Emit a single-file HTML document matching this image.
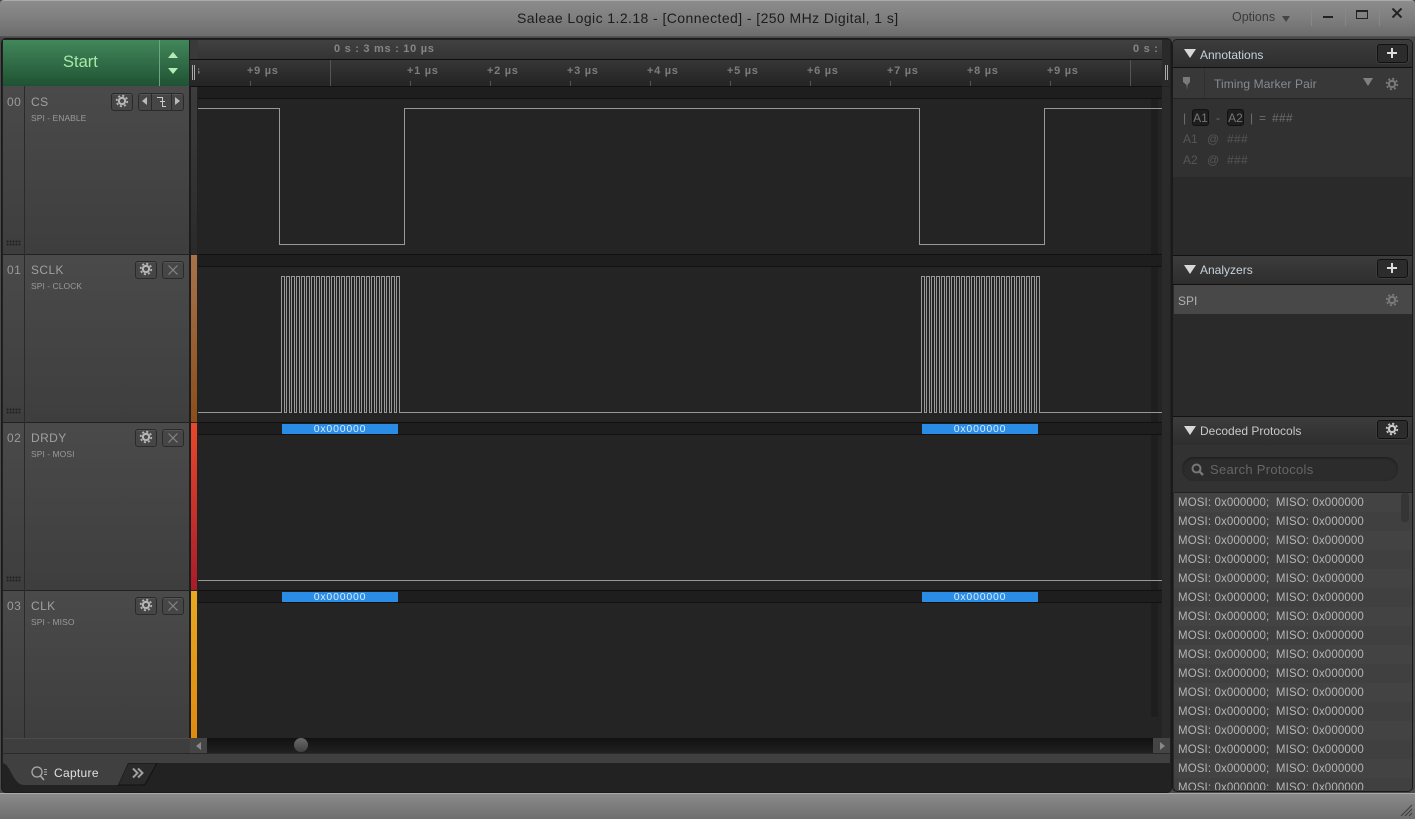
<!DOCTYPE html>
<html><head><meta charset="utf-8"><title>Saleae Logic</title>
<style>
html,body{margin:0;padding:0;background:#4a4a4a}
body{width:1415px;height:819px;overflow:hidden;position:relative;font-family:"Liberation Sans",sans-serif}
div,span.a,svg.a{position:absolute}
.t{white-space:nowrap;line-height:1}
.row{left:3px;width:186px;background:linear-gradient(#4a4a4a,#3e3e3e);border-bottom:1px solid #222}
.numsep{left:24px;width:1px;background:#2a2a2a}
.num{left:7px;font-size:12px;color:#9a9a9a;letter-spacing:.5px}
.nm{left:31px;font-size:12px;color:#a0a0a0;letter-spacing:.4px}
.sub{left:31px;font-size:8.5px;color:#9a9a9a;letter-spacing:.05px}
.btn{width:20px;height:16px;border:1px solid #2a2a2a;border-radius:3px;background:#464646;box-shadow:inset 0 1px 0 #555}
.band{left:198px;width:964px;height:11px;background:#1e1e1e;border-top:1px solid #111;border-bottom:1px solid #111}
.tick{font-size:11px;font-weight:bold;color:#7c7c7c;top:66px;letter-spacing:.7px}
.tk{width:1px;height:5px;top:81px;background:#555}
.phead{left:1173px;width:239px;background:linear-gradient(#3c3c3c,#2e2e2e);border-bottom:1px solid #111;border-top:1px solid #111}
.ptitle{left:1200px;font-size:12px;color:#c6d2dc}
.tri{width:0;height:0;border-left:6px solid transparent;border-right:6px solid transparent;border-top:9px solid #d8d8d8;left:1184px}
.pbtn{left:1377px;width:29px;height:17px;background:#2c2c2c;border:1px solid #111;border-radius:3px;box-shadow:0 0 0 1px #3c3c3c}
.li{left:1173px;width:228px;height:19px;padding-left:5px;font-size:11.5px;line-height:19px;color:#b4b4b4;white-space:nowrap;letter-spacing:.12px}
.blue{height:10px;background:#2a8ce4;color:#d8ecff;font-size:10.5px;line-height:10px;text-align:center;letter-spacing:.8px;width:116px}
.grip{left:6px;width:15px;height:6px;background:radial-gradient(circle,#222 1px,transparent 1.1px) 0 0/3px 3px}
</style></head><body>
<svg width="0" height="0" style="position:absolute"><defs>
<g id="gear"><circle cx="8" cy="8" r="3.1" fill="none" stroke="currentColor" stroke-width="2.2"/><circle cx="8" cy="8" r="5.3" fill="none" stroke="currentColor" stroke-width="1.8" stroke-dasharray="2.1 2.06"/></g>
</defs></svg>

<!-- title bar -->
<div style="left:0;top:0;width:1415px;height:37px;background:linear-gradient(#8c8c8c 0,#7e7e7e 50%,#6c6c6c 100%);border-top:1px solid #aaa;box-sizing:border-box;border-radius:4px 4px 0 0"></div>
<div style="left:0;top:36px;width:1415px;height:1px;background:#555"></div>
<div class="t" style="left:517px;top:11px;font-size:14px;color:#1c1c1c;letter-spacing:.42px">Saleae Logic 1.2.18 - [Connected] - [250 MHz Digital, 1 s]</div>
<div class="t" style="left:1232px;top:11px;font-size:12.5px;color:#3a3a3a">Options</div>
<div style="left:1282px;top:16px;width:0;height:0;border-left:4.5px solid transparent;border-right:4.5px solid transparent;border-top:6px solid #444"></div>
<div style="left:1311px;top:2px;width:1px;height:24px;background:#888"></div>
<div style="left:1345px;top:2px;width:1px;height:24px;background:#888"></div>
<div style="left:1379px;top:2px;width:1px;height:24px;background:#888"></div>
<div style="left:1323px;top:16px;width:10px;height:2px;background:#222"></div>
<div style="left:1356px;top:10px;width:10px;height:6px;border:1px solid #222;border-top-width:2px"></div>
<svg class="a" style="left:1391px;top:7px" width="12" height="12"><path d="M1.5 1.5L10.5 10.5M10.5 1.5L1.5 10.5" stroke="#222" stroke-width="2"/></svg>

<!-- main frame -->
<div style="left:2px;top:39px;width:1169px;height:753px;background:#222;border:0 solid #111;border-radius:4px;box-shadow:0 0 0 1px #1a1a1a"></div>

<!-- start button -->
<div style="left:3px;top:40px;width:156px;height:46px;background:linear-gradient(#42875a,#1f5233)"></div>
<div style="left:159px;top:40px;width:1px;height:46px;background:#6aa580"></div>
<div style="left:160px;top:40px;width:29px;height:46px;background:linear-gradient(#42875a,#1f5233)"></div>
<div class="t" style="left:63px;top:54px;font-size:16.5px;color:#a8e8a8">Start</div>
<div style="left:168px;top:52px;width:0;height:0;border-left:5px solid transparent;border-right:5px solid transparent;border-bottom:6px solid #b4ecb4"></div>
<div style="left:168px;top:68px;width:0;height:0;border-left:5px solid transparent;border-right:5px solid transparent;border-top:6px solid #b4ecb4"></div>

<!-- time header -->
<div style="left:190px;top:40px;width:8px;height:46px;background:#3a3a3a"></div>
<div style="left:198px;top:40px;width:964px;height:19px;background:linear-gradient(#414141,#343434)"></div>
<div style="left:190px;top:59px;width:972px;height:1px;background:#0e0e0e"></div>
<div style="left:190px;top:60px;width:972px;height:26px;background:linear-gradient(#363636,#242424)"></div>
<div style="left:1162px;top:40px;width:8px;height:46px;background:#2a2a2a"></div>
<div style="left:190px;top:86px;width:972px;height:1px;background:#0e0e0e"></div>
<div style="left:192px;top:65px;width:1px;height:15px;background:#aaa"></div>
<div style="left:194px;top:65px;width:1px;height:15px;background:#aaa"></div>
<div style="left:1165px;top:65px;width:1px;height:15px;background:#aaa"></div>
<div style="left:1167px;top:65px;width:1px;height:15px;background:#aaa"></div>
<div style="left:330px;top:60px;width:1px;height:26px;background:#555"></div>
<div style="left:1130px;top:60px;width:1px;height:26px;background:#555"></div>
<div class="t" style="left:334px;top:44px;font-size:11px;font-weight:bold;color:#858585;letter-spacing:.72px">0 s : 3 ms : 10 µs</div>
<div class="t" style="left:1133px;top:44px;font-size:11px;font-weight:bold;color:#858585;letter-spacing:.72px">0 s :</div>
<div style="left:198px;top:60px;width:3px;height:22px;overflow:hidden"><div class="t tick" style="left:-4px;top:6px">s</div></div>
<div class="t tick" style="left:247px">+9 µs</div><div class="tk" style="left:250px"></div>
<div class="t tick" style="left:407px">+1 µs</div><div class="tk" style="left:410px"></div>
<div class="t tick" style="left:487px">+2 µs</div><div class="tk" style="left:490px"></div>
<div class="t tick" style="left:567px">+3 µs</div><div class="tk" style="left:570px"></div>
<div class="t tick" style="left:647px">+4 µs</div><div class="tk" style="left:650px"></div>
<div class="t tick" style="left:727px">+5 µs</div><div class="tk" style="left:730px"></div>
<div class="t tick" style="left:807px">+6 µs</div><div class="tk" style="left:810px"></div>
<div class="t tick" style="left:887px">+7 µs</div><div class="tk" style="left:890px"></div>
<div class="t tick" style="left:967px">+8 µs</div><div class="tk" style="left:970px"></div>
<div class="t tick" style="left:1047px">+9 µs</div><div class="tk" style="left:1050px"></div>

<!-- channel rows -->
<div class="row" style="top:86px;height:168px"></div>
<div class="row" style="top:255px;height:167px"></div>
<div class="row" style="top:423px;height:167px"></div>
<div class="row" style="top:591px;height:147px;border-bottom:0"></div>
<div class="numsep" style="top:86px;height:652px"></div>

<div class="t num" style="top:96px">00</div><div class="t nm" style="top:96px">CS</div><div class="t sub" style="top:114px">SPI - ENABLE</div>
<div class="t num" style="top:264px">01</div><div class="t nm" style="top:264px">SCLK</div><div class="t sub" style="top:282px">SPI - CLOCK</div>
<div class="t num" style="top:432px">02</div><div class="t nm" style="top:432px">DRDY</div><div class="t sub" style="top:450px">SPI - MOSI</div>
<div class="t num" style="top:600px">03</div><div class="t nm" style="top:600px">CLK</div><div class="t sub" style="top:618px">SPI - MISO</div>

<!-- grip dots -->
<div class="grip" style="top:240px"></div>
<div class="grip" style="top:408px"></div>
<div class="grip" style="top:576px"></div>

<!-- row 0 buttons -->
<div class="btn" style="left:111px;top:93px"></div>
<svg class="a" style="left:114px;top:93px;color:#b4b4b4" width="16" height="16"><use href="#gear"/></svg>
<div class="btn" style="left:138px;top:93px;width:44px"></div>
<div style="left:151px;top:94px;width:1px;height:16px;background:#2a2a2a"></div>
<div style="left:171px;top:94px;width:1px;height:16px;background:#2a2a2a"></div>
<div style="left:142px;top:97px;width:0;height:0;border-top:4.5px solid transparent;border-bottom:4.5px solid transparent;border-right:5px solid #bbb"></div>
<div style="left:175px;top:97px;width:0;height:0;border-top:4.5px solid transparent;border-bottom:4.5px solid transparent;border-left:5px solid #bbb"></div>
<svg class="a" style="left:155px;top:96px" width="13" height="12"><path d="M2 1.5H7.5V5.5M5 5.5H10M7.5 5.5V10.5H11" fill="none" stroke="#ccc" stroke-width="1"/></svg>

<!-- rows 1-3 buttons -->
<div class="btn" style="left:135px;top:261px"></div><svg class="a" style="left:138px;top:261px;color:#b4b4b4" width="16" height="16"><use href="#gear"/></svg>
<div class="btn" style="left:162px;top:261px"></div><svg class="a" style="left:167px;top:264px" width="12" height="12"><path d="M1.5 1.5L10.5 10.5M10.5 1.5L1.5 10.5" stroke="#8a8a8a"/></svg>
<div class="btn" style="left:135px;top:429px"></div><svg class="a" style="left:138px;top:429px;color:#b4b4b4" width="16" height="16"><use href="#gear"/></svg>
<div class="btn" style="left:162px;top:429px"></div><svg class="a" style="left:167px;top:432px" width="12" height="12"><path d="M1.5 1.5L10.5 10.5M10.5 1.5L1.5 10.5" stroke="#8a8a8a"/></svg>
<div class="btn" style="left:135px;top:597px"></div><svg class="a" style="left:138px;top:597px;color:#b4b4b4" width="16" height="16"><use href="#gear"/></svg>
<div class="btn" style="left:162px;top:597px"></div><svg class="a" style="left:167px;top:600px" width="12" height="12"><path d="M1.5 1.5L10.5 10.5M10.5 1.5L1.5 10.5" stroke="#8a8a8a"/></svg>

<!-- colour strips -->
<div style="left:189px;top:86px;width:2px;height:652px;background:#1c1c1c"></div>
<div style="left:191px;top:87px;width:6px;height:167px;background:linear-gradient(#3c3c3c,#2a2a2a)"></div>
<div style="left:191px;top:255px;width:6px;height:167px;background:linear-gradient(#a8724a,#8c4e1a)"></div>
<div style="left:191px;top:423px;width:6px;height:167px;background:linear-gradient(#e8482a,#a81c2a)"></div>
<div style="left:191px;top:591px;width:6px;height:147px;background:linear-gradient(#e8a820,#e08a10)"></div>

<!-- waveform area -->
<div style="left:198px;top:87px;width:964px;height:651px;background:#242424"></div>
<div style="left:1151px;top:87px;width:7px;height:630px;background:#1e1e1e"></div>
<div style="left:1162px;top:87px;width:8px;height:651px;background:#2a2a2a"></div>
<div class="band" style="top:86px"></div>
<div class="band" style="top:254px"></div>
<div class="band" style="top:422px"></div>
<div class="band" style="top:590px"></div>

<svg class="a" style="left:0;top:0" width="1170" height="740">
<path fill="none" stroke="#989898" stroke-width="1" d="M198 108.5H279.5V244.5H404.5V108.5H919.5V244.5H1044.5V108.5H1162"/>
<path fill="none" stroke="#989898" stroke-width="1" d="M198 412.5H281.5v-136h3v136h2v-136h3v136h2v-136h3v136h2v-136h3v136h2v-136h3v136h2v-136h3v136h2v-136h3v136h2v-136h3v136h2v-136h3v136h2v-136h3v136h2v-136h3v136h2v-136h3v136h2v-136h3v136h2v-136h3v136h2v-136h3v136h2v-136h3v136h2v-136h3v136h2v-136h3v136h2v-136h3v136h2v-136h3v136h2v-136h3v136h2v-136h3v136h2v-136h3v136h2v-136h3v136H921.5v-136h3v136h2v-136h3v136h2v-136h3v136h2v-136h3v136h2v-136h3v136h2v-136h3v136h2v-136h3v136h2v-136h3v136h2v-136h3v136h2v-136h3v136h2v-136h3v136h2v-136h3v136h2v-136h3v136h2v-136h3v136h2v-136h3v136h2v-136h3v136h2v-136h3v136h2v-136h3v136h2v-136h3v136h2v-136h3v136h2v-136h3v136h2v-136h3v136h2v-136h3v136h2v-136h3v136H1162"/>
<path fill="none" stroke="#989898" stroke-width="1" d="M198 580.5H1162"/>
</svg>

<div class="blue t" style="left:282px;top:424px">0x000000</div>
<div class="blue t" style="left:922px;top:424px">0x000000</div>
<div class="blue t" style="left:282px;top:592px">0x000000</div>
<div class="blue t" style="left:922px;top:592px">0x000000</div>

<!-- horizontal scrollbar -->
<div style="left:3px;top:738px;width:187px;height:16px;background:#3e3e3e;border-top:1px solid #4c4c4c;box-sizing:border-box"></div>
<div style="left:190px;top:738px;width:17px;height:16px;background:#454545"></div>
<div style="left:196px;top:742px;width:0;height:0;border-top:4px solid transparent;border-bottom:4px solid transparent;border-right:5px solid #888"></div>
<div style="left:207px;top:738px;width:946px;height:16px;background:linear-gradient(#111,#222)"></div>
<div style="left:1153px;top:738px;width:17px;height:16px;background:#454545"></div>
<div style="left:1160px;top:742px;width:0;height:0;border-top:4px solid transparent;border-bottom:4px solid transparent;border-left:5px solid #888"></div>
<div style="left:294px;top:738px;width:14px;height:14px;border-radius:50%;background:linear-gradient(#6a6a6a,#404040)"></div>
<div style="left:3px;top:753px;width:1167px;height:1px;background:#2a2a2a"></div>
<div style="left:3px;top:754px;width:1167px;height:9px;background:#404040"></div>

<!-- tab bar -->
<div style="left:3px;top:763px;width:1167px;height:27px;background:#222;border-radius:0 0 3px 3px"></div>
<svg class="a" style="left:3px;top:763px" width="160" height="27">
<path d="M125 0H154L143 20C142 22 141 22 138 22H115Z" fill="#2a2a2a" stroke="#111"/>
<path d="M0 0C8 2 10 22 21 22H115L125 0Z" fill="#404040"/>
</svg>
<svg class="a" style="left:30px;top:765px" width="20" height="18"><circle cx="7" cy="7" r="5" fill="none" stroke="#aaa" stroke-width="1.3"/><path d="M10.5 11L14 15" stroke="#aaa" stroke-width="1.6"/><path d="M14 4.5H17M14 7H17M14 9.5H17" stroke="#aaa"/></svg>
<div class="t" style="left:54px;top:767px;font-size:12px;color:#e0e0e0;letter-spacing:.3px">Capture</div>
<svg class="a" style="left:132px;top:767px" width="13" height="12"><path d="M1 1.5L5.5 6L1 10.5M6 1.5L10.5 6L6 10.5" fill="none" stroke="#a0a0a0" stroke-width="2"/></svg>

<!-- right panel -->
<div style="left:1173px;top:40px;width:239px;height:751px;background:#2a2a2a;border-radius:4px;box-shadow:0 0 0 1px #1a1a1a"></div>

<div class="phead" style="top:40px;height:27px;border-top:0;border-radius:4px 4px 0 0"></div>
<div class="tri" style="top:49px"></div>
<div class="t ptitle" style="top:49px">Annotations</div>
<div class="pbtn" style="top:44px"></div>
<div style="left:1387px;top:52px;width:10px;height:2px;background:#ddd"></div>
<div style="left:1391px;top:48px;width:2px;height:10px;background:#ddd"></div>

<div style="left:1173px;top:68px;width:239px;height:30px;background:#383838;border-bottom:1px solid #232323"></div>
<div style="left:1204px;top:68px;width:1px;height:30px;background:#303030"></div>
<svg class="a" style="left:1182px;top:76px" width="10" height="15"><path d="M1 1H8V6L5.5 9L5 14L4.5 9L1 6Z" fill="#7a7a7a"/></svg>
<div class="t" style="left:1214px;top:78px;font-size:12px;color:#848c94;letter-spacing:.1px">Timing Marker Pair</div>
<div style="left:1363px;top:78px;width:0;height:0;border-left:5px solid transparent;border-right:5px solid transparent;border-top:8px solid #808080"></div>
<svg class="a" style="left:1384px;top:76px;color:#787878" width="16" height="16"><use href="#gear"/></svg>

<div style="left:1173px;top:99px;width:239px;height:78px;background:#313131"></div>
<div class="t" style="left:1183px;top:112px;font-size:12px;color:#6e6e6e">|</div>
<div class="t" style="left:1192px;top:109px;width:15px;height:15px;background:#1e1e1e;border:1px solid #111;border-radius:3px;font-size:12px;line-height:17px;text-align:center;color:#777">A1</div>
<div class="t" style="left:1216px;top:112px;font-size:12px;color:#6e6e6e">-</div>
<div class="t" style="left:1227px;top:109px;width:15px;height:15px;background:#1e1e1e;border:1px solid #111;border-radius:3px;font-size:12px;line-height:17px;text-align:center;color:#777">A2</div>
<div class="t" style="left:1250px;top:112px;font-size:12px;color:#6e6e6e">|</div>
<div class="t" style="left:1259px;top:112px;font-size:12px;color:#6e6e6e">=</div>
<div class="t" style="left:1272px;top:112px;font-size:12px;color:#6e6e6e;letter-spacing:.3px">###</div>
<div class="t" style="left:1183px;top:133px;font-size:12px;color:#565656">A1</div>
<div class="t" style="left:1207px;top:133px;font-size:12px;color:#565656">@</div>
<div class="t" style="left:1227px;top:133px;font-size:12px;color:#565656;letter-spacing:.3px">###</div>
<div class="t" style="left:1183px;top:154px;font-size:12px;color:#565656">A2</div>
<div class="t" style="left:1207px;top:154px;font-size:12px;color:#565656">@</div>
<div class="t" style="left:1227px;top:154px;font-size:12px;color:#565656;letter-spacing:.3px">###</div>

<div class="phead" style="top:255px;height:28px"></div>
<div class="tri" style="top:265px"></div>
<div class="t ptitle" style="top:264px">Analyzers</div>
<div class="pbtn" style="top:259px"></div>
<div style="left:1387px;top:267px;width:10px;height:2px;background:#ddd"></div>
<div style="left:1391px;top:263px;width:2px;height:10px;background:#ddd"></div>
<div style="left:1174px;top:285px;width:238px;height:29px;background:#484848"></div>
<div class="t" style="left:1178px;top:295px;font-size:12px;color:#b0b0b0">SPI</div>
<svg class="a" style="left:1384px;top:292px;color:#787878" width="16" height="16"><use href="#gear"/></svg>

<div class="phead" style="top:416px;height:28px"></div>
<div class="tri" style="top:426px"></div>
<div class="t ptitle" style="top:425px;color:#c8c8c8">Decoded Protocols</div>
<div class="pbtn" style="top:420px"></div>
<svg class="a" style="left:1384px;top:421px;color:#c8c8c8" width="16" height="16"><use href="#gear"/></svg>

<div style="left:1173px;top:445px;width:239px;height:47px;background:#323232"></div>
<div style="left:1182px;top:457px;width:216px;height:24px;border-radius:12px;background:#2c2c2c;box-shadow:inset 0 1px 2px #1c1c1c"></div>
<svg class="a" style="left:1191px;top:463px" width="14" height="14"><circle cx="5.5" cy="5.5" r="4" fill="none" stroke="#777" stroke-width="2"/><path d="M8.5 8.5L12 12" stroke="#777" stroke-width="2.4"/></svg>
<div class="t" style="left:1210px;top:463px;font-size:13px;color:#666;letter-spacing:.28px">Search Protocols</div>

<div style="left:1174px;top:492px;width:238px;height:299px;overflow:hidden;background:repeating-linear-gradient(#434343 0 19px,#404040 19px 38px);border-top:1px solid #222;box-sizing:border-box;border-radius:0 0 4px 4px"></div>
<div style="left:1173px;top:493px;width:239px;height:297px;overflow:hidden">
<div class="li" style="left:0;top:0;margin-top:1px">MOSI: 0x000000;&nbsp; MISO: 0x000000</div>
<div class="li" style="left:0;top:19px;margin-top:1px">MOSI: 0x000000;&nbsp; MISO: 0x000000</div>
<div class="li" style="left:0;top:38px;margin-top:1px">MOSI: 0x000000;&nbsp; MISO: 0x000000</div>
<div class="li" style="left:0;top:57px;margin-top:1px">MOSI: 0x000000;&nbsp; MISO: 0x000000</div>
<div class="li" style="left:0;top:76px;margin-top:1px">MOSI: 0x000000;&nbsp; MISO: 0x000000</div>
<div class="li" style="left:0;top:95px;margin-top:1px">MOSI: 0x000000;&nbsp; MISO: 0x000000</div>
<div class="li" style="left:0;top:114px;margin-top:1px">MOSI: 0x000000;&nbsp; MISO: 0x000000</div>
<div class="li" style="left:0;top:133px;margin-top:1px">MOSI: 0x000000;&nbsp; MISO: 0x000000</div>
<div class="li" style="left:0;top:152px;margin-top:1px">MOSI: 0x000000;&nbsp; MISO: 0x000000</div>
<div class="li" style="left:0;top:171px;margin-top:1px">MOSI: 0x000000;&nbsp; MISO: 0x000000</div>
<div class="li" style="left:0;top:190px;margin-top:1px">MOSI: 0x000000;&nbsp; MISO: 0x000000</div>
<div class="li" style="left:0;top:209px;margin-top:1px">MOSI: 0x000000;&nbsp; MISO: 0x000000</div>
<div class="li" style="left:0;top:228px;margin-top:1px">MOSI: 0x000000;&nbsp; MISO: 0x000000</div>
<div class="li" style="left:0;top:247px;margin-top:1px">MOSI: 0x000000;&nbsp; MISO: 0x000000</div>
<div class="li" style="left:0;top:266px;margin-top:1px">MOSI: 0x000000;&nbsp; MISO: 0x000000</div>
<div class="li" style="left:0;top:285px;margin-top:1px">MOSI: 0x000000;&nbsp; MISO: 0x000000</div>
</div>
<div style="left:1401px;top:493px;width:8px;height:29px;background:#353535;border-radius:3px"></div>

<!-- status bar -->
<div style="left:0;top:793px;width:1415px;height:26px;background:linear-gradient(#8a8a8a,#6e6e6e);border-top:1px solid #aaa;box-sizing:border-box"></div>
<svg class="a" style="left:1400px;top:804px" width="13" height="13"><path d="M1 12L12 1M5 12L12 5M9 12L12 9" stroke="#3c3c3c"/></svg>
</body></html>
